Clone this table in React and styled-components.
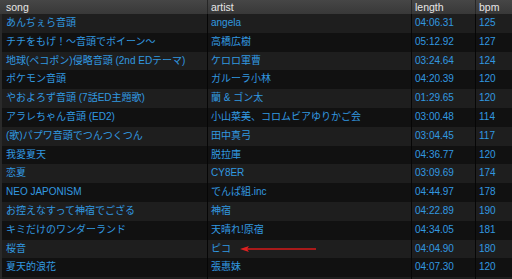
import React from "react";
import styled, { createGlobalStyle } from "styled-components";

const Global = createGlobalStyle`
  html, body { margin: 0; padding: 0; background: #161616; }
  body { font-family: "Liberation Sans", "Noto Sans CJK JP", sans-serif; }
`;

const rows = [
  ["あんぢぇら音頭", "angela", "04:06.31", "125"],
  ["チチをもげ！～音頭でボイーン～", "高橋広樹", "05:12.92", "127"],
  ["地球(ペコポン)侵略音頭 (2nd EDテーマ)", "ケロロ軍曹", "03:24.64", "124"],
  ["ポケモン音頭", "ガルーラ小林", "04:20.39", "120"],
  ["やおよろず音頭 (7話ED主題歌)", "蘭 & ゴン太", "01:29.65", "120"],
  ["アラレちゃん音頭 (ED2)", "小山菜美、コロムビアゆりかご会", "03:00.48", "114"],
  ["(歌)パプワ音頭でつんつくつん", "田中真弓", "03:04.45", "117"],
  ["我愛夏天", "脱拉庫", "04:36.77", "120"],
  ["恋夏", "CY8ER", "03:09.69", "174"],
  ["NEO JAPONISM", "でんぱ組.inc", "04:44.97", "178"],
  ["お控えなすって神宿でござる", "神宿", "04:22.89", "190"],
  ["キミだけのワンダーランド", "天晴れ!原宿", "04:34.05", "181"],
  ["桜音", "ピコ", "04:04.90", "180"],
  ["夏天的浪花", "張惠妹", "04:07.30", "120"],
];

const Wrap = styled.div`
  position: relative;
  width: 512px;
  height: 279px;
  overflow: hidden;
  background: #111;
`;

const Grid = styled.div`
  display: grid;
  grid-template-columns: 208px 204px 64px 36px;
`;

const HeadCell = styled.div`
  height: 14px;
  line-height: 14px;
  padding-left: ${(p) => (p.$first ? "6px" : "3px")};
  font-size: 10.5px;
  color: #e6e6e6;
  background: linear-gradient(#464646, #383838);
  border-right: 1px solid ${(p) => (p.$last ? "transparent" : "#262626")};
  white-space: nowrap;
  overflow: hidden;
  box-sizing: border-box;
`;

const Cell = styled.div`
  height: 18.8px;
  line-height: 18.8px;
  padding-left: ${(p) => (p.$first ? "4px" : "3px")};
  font-size: 10px;
  color: #3199e0;
  background: ${(p) => (p.$odd ? "#1e1e1e" : "#111111")};
  border-right: 1px solid ${(p) => (p.$last ? "transparent" : "#060606")};
  border-left: ${(p) => (p.$first ? "2px solid #2a2a2a" : "none")};
  white-space: nowrap;
  overflow: hidden;
  box-sizing: border-box;
`;

const Arrow = styled.svg`
  position: absolute;
  left: 238px;
  top: 244px;
`;

export default function App() {
  return (
    <Wrap>
      <Global />
      <Grid>
        <HeadCell $first>song</HeadCell>
        <HeadCell>artist</HeadCell>
        <HeadCell>length</HeadCell>
        <HeadCell $last>bpm</HeadCell>
        {rows.map((r, i) =>
          r.map((c, j) => (
            <Cell key={i + "-" + j} $odd={i % 2 === 0} $first={j === 0} $last={j === 3}>
              {c}
            </Cell>
          ))
        )}
        {["", "", "", ""].map((c, j) => (
          <Cell key={"x" + j} $odd={true} $first={j === 0} $last={j === 3} />
        ))}
      </Grid>
      <Arrow width="80" height="10" viewBox="0 0 80 10">
        <line x1="6" y1="5" x2="78" y2="5" stroke="#d81a1a" strokeWidth="1.3" />
        <polygon points="2,5 11,2 9,5 11,8" fill="#e02020" />
      </Arrow>
    </Wrap>
  );
}
